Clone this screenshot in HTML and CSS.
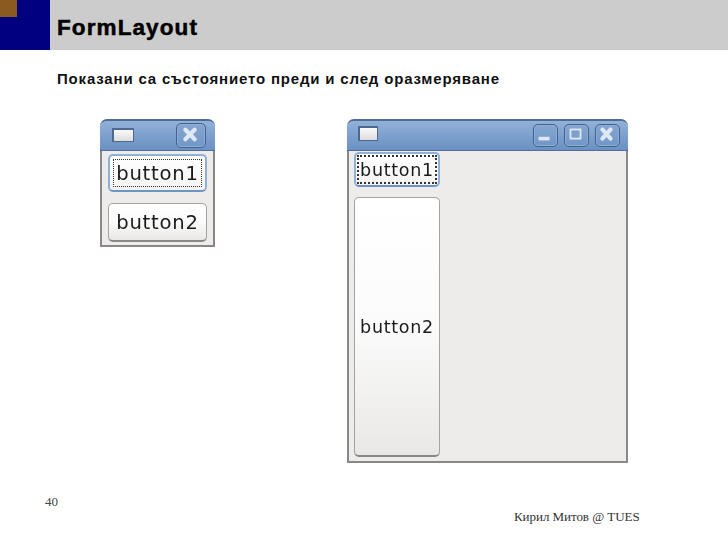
FILE: index.html
```html
<!DOCTYPE html>
<html lang="bg">
<head>
<meta charset="utf-8">
<title>FormLayout</title>
<link rel="stylesheet" href="styles.css">
</head>
<body>
<div class="slide">
  <header class="head">
    <div class="logo"><div class="logo-square"></div></div>
    <div class="title-bar"><h1 class="title">FormLayout</h1></div>
  </header>
  <p class="subtitle">Показани са състоянието преди и след оразмеряване</p>
  <main class="stage">
    <section class="win win-small">
      <div class="titlebar">
        <div class="win-icon"></div>
        <div class="controls">
          <div class="ctl ctl-wide"><svg viewBox="0 0 30 24" class="glyph"><path d="M10 7l10 10M20 7L10 17" stroke="#dfe8f4" stroke-width="4.5" stroke-linecap="round" fill="none"/></svg></div>
        </div>
      </div>
      <div class="win-body body-small">
        <button class="btn btn-focus btn-s1"><span class="focus-ring">button1</span></button>
        <button class="btn btn-s2">button2</button>
      </div>
    </section>
    <section class="win win-large">
      <div class="titlebar">
        <div class="win-icon"></div>
        <div class="controls">
          <div class="ctl"><svg viewBox="0 0 25 23" class="glyph"><rect x="6" y="14" width="12" height="4" fill="#dfe8f4"/></svg></div>
          <div class="ctl"><svg viewBox="0 0 25 23" class="glyph"><rect x="7" y="6" width="11" height="10" fill="#7fa0cc" stroke="#dfe8f4" stroke-width="2"/></svg></div>
          <div class="ctl"><svg viewBox="0 0 25 23" class="glyph"><path d="M8 6l9 10M17 6L8 16" stroke="#dfe8f4" stroke-width="4.5" stroke-linecap="round" fill="none"/></svg></div>
        </div>
      </div>
      <div class="win-body body-large">
        <button class="btn btn-focus btn-l1"><span class="focus-ring ring-tight">button1</span></button>
        <button class="btn btn-l2">button2</button>
      </div>
    </section>
  </main>
  <footer class="foot">
    <div class="page-num">40</div>
    <div class="author">Кирил Митов @ TUES</div>
  </footer>
</div>
</body>
</html>
```
FILE: styles.css
```css
* { box-sizing: border-box; }
html, body { margin: 0; padding: 0; background: #fff; }
.slide { width: 728px; height: 546px; overflow: hidden; display: flex; flex-direction: column; }
.head { display: flex; height: 50px; flex: none; }
.logo { width: 50px; background: #000080; flex: none; }
.logo-square { width: 17px; height: 17px; background: #8b5a20; }
.title-bar { flex: 1; background: #cccccc; padding-left: 7px; }
.title { margin: 0; font: bold 22.5px/56px "Liberation Sans", Arial, sans-serif; letter-spacing: 1.1px; -webkit-text-stroke: 0.5px #000; color: #000; }
.subtitle { margin: 20px 0 0 57px; font: bold 15px/17px "Liberation Sans", Arial, sans-serif; letter-spacing: 0.82px; color: #111; }
.stage { display: flex; padding: 32px 0 0 100px; gap: 132px; align-items: flex-start; flex: none; }
.win { display: flex; flex-direction: column; flex: none; filter: blur(0.3px); }
.win-small { width: 115px; height: 128px; }
.win-large { width: 281px; height: 344px; }
.titlebar { height: 32px; flex: none; display: flex; align-items: center; justify-content: space-between; padding: 0 8px 0 12px; border-radius: 7px 7px 0 0; border-top: 2px solid #4a6c95; background: linear-gradient(#93b1d8, #7b9fcd 55%, #6a91c3); border-bottom: 1px solid #4f6f99; }
.win-large .titlebar { padding-left: 11px; }
.win-small .titlebar { padding-right: 9px; }
.win-icon { width: 22px; height: 14px; margin-top: -1px; border: solid #4d6a8e; border-width: 2px 1px 1px 2px; background: linear-gradient(#fafafa, #dcdcdc); }
.win-large .win-icon { width: 20px; height: 15px; margin-top: -4px; }
.controls { display: flex; gap: 6px; margin-top: -1px; }
.ctl { width: 25px; height: 23px; border: 1px solid #41628d; border-radius: 5px; background: linear-gradient(#86a6d0, #7097c9); box-shadow: inset 0 0 0 1px #8fadd5; }
.ctl-wide { width: 30px; height: 25px; }
.glyph { display: block; width: 100%; height: 100%; margin: -1px 0 0 -1px; }
.win-body { flex: 1; background: #edeceb; border: solid #8a8886; border-width: 0 2px 2px; display: flex; flex-direction: column; align-items: flex-start; }
.body-small { padding: 3px 6px 0; gap: 11px; }
.body-large { padding: 1px 5px 0; gap: 10px; }
.btn { display: flex; align-items: center; justify-content: center; padding: 0; font-family: "DejaVu Sans", sans-serif; color: #1a1a1a; border: 1px solid #a5a29f; border-bottom: 2px solid #8a8784; border-radius: 5px; background: linear-gradient(#ffffff, #fbfbfb 50%, #e9e8e6); }
.btn-focus { border: 2px solid #8fb0d6; border-bottom-color: #6e94c4; background: linear-gradient(#fff, #f4f3f2); }
.btn-s1, .btn-s2 { width: 99px; font-size: 19.6px; letter-spacing: 0.8px; }
.btn-s1 { height: 38px; }
.btn-s2 { height: 39px; }
.btn-l1, .btn-l2 { width: 86px; font-size: 17.5px; letter-spacing: 0.7px; }
.btn-l1 { height: 35px; }
.btn-l2 { height: 260px; }
.focus-ring { display: flex; align-items: center; justify-content: center; border: 1.5px dotted #333; width: calc(100% - 6px); height: calc(100% - 6px); }
.ring-tight { width: calc(100% - 2px); height: calc(100% - 2px); border-width: 2px; }
.foot { flex: 1; }
.page-num { margin: 31px 0 0 45px; font: 13px/16px "Liberation Serif", serif; color: #444; }
.author { margin: -1px 0 0 514px; font: 13px/16px "Liberation Serif", serif; letter-spacing: -0.05px; color: #333; }
```
